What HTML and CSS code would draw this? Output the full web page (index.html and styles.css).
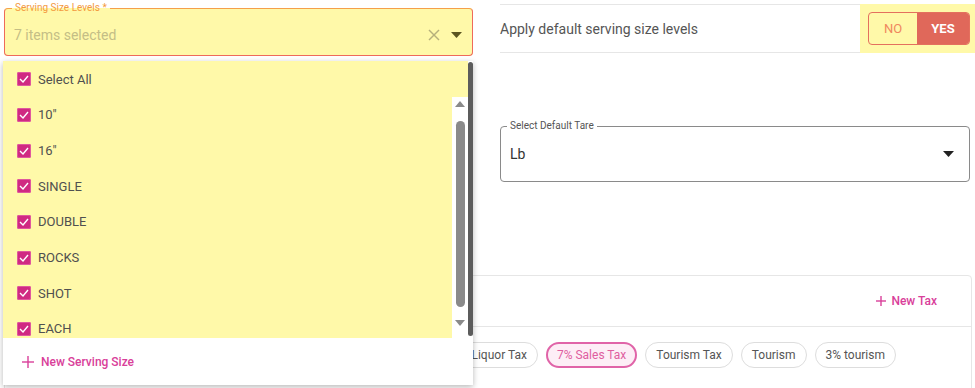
FILE: index.html
```html
<!DOCTYPE html>
<html lang="en">
<head>
    <meta charset="UTF-8">
    <meta name="viewport" content="width=device-width, initial-scale=1.0">
    <title>Serving Sizes</title>
    <link rel="stylesheet" href="styles.css">
</head>
<body>
    <div class="page">
        <div class="top">
            <div class="col-left">
                <fieldset class="field field-active">
                    <legend>Serving Size Levels *</legend>
                    <div class="field-row">
                        <span class="placeholder">7 items selected</span>
                        <svg class="clear-icon" width="12" height="12" viewBox="0 0 12 12" fill="none" stroke="currentColor" stroke-width="1.4">
                            <line x1="1" y1="1" x2="11" y2="11"></line>
                            <line x1="11" y1="1" x2="1" y2="11"></line>
                        </svg>
                        <svg class="arrow-icon arrow-dark" width="11" height="6" viewBox="0 0 11 6"><polygon points="0 0 11 0 5.5 6" fill="currentColor"></polygon></svg>
                    </div>
                </fieldset>
            </div>

            <div class="col-right">
                <div class="toggle-row">
                    <span class="toggle-label">Apply default serving size levels</span>
                    <div class="toggle-hl">
                        <div class="toggle">
                            <span class="toggle-no">NO</span>
                            <span class="toggle-yes">YES</span>
                        </div>
                    </div>
                </div>

                <fieldset class="field tare-field">
                    <legend>Select Default Tare</legend>
                    <div class="field-row">
                        <span class="value">Lb</span>
                        <svg class="arrow-icon" width="11" height="6" viewBox="0 0 11 6"><polygon points="0 0 11 0 5.5 6" fill="currentColor"></polygon></svg>
                    </div>
                </fieldset>
            </div>
        </div>

        <div class="tax-card">
            <div class="tax-head">
                <a class="link-add">
                    <svg width="10" height="10" viewBox="0 0 10 10" stroke="currentColor" stroke-width="1.4"><line x1="5" y1="0" x2="5" y2="10"></line><line x1="0" y1="5" x2="10" y2="5"></line></svg>
                    New Tax
                </a>
            </div>
            <div class="chips">
                <span class="chip">Liquor Tax</span>
                <span class="chip chip-on">7% Sales Tax</span>
                <span class="chip">Tourism Tax</span>
                <span class="chip">Tourism</span>
                <span class="chip">3% tourism</span>
            </div>
        </div>

        <!-- open dropdown of the serving size select -->
        <div class="dropdown">
            <div class="dd-body">
                <div class="dd-main">
                    <div class="dd-item dd-head">
                        <span class="check"><svg width="10" height="8" viewBox="0 0 10 8" fill="none" stroke="#fff" stroke-width="1.4"><polyline points="1 4 4 7 9 1"></polyline></svg></span>
                        Select All
                    </div>
                    <div class="dd-scroll">
                        <div class="dd-items">
                            <div class="dd-item"><span class="check"><svg width="10" height="8" viewBox="0 0 10 8" fill="none" stroke="#fff" stroke-width="1.4"><polyline points="1 4 4 7 9 1"></polyline></svg></span>10"</div>
                            <div class="dd-item"><span class="check"><svg width="10" height="8" viewBox="0 0 10 8" fill="none" stroke="#fff" stroke-width="1.4"><polyline points="1 4 4 7 9 1"></polyline></svg></span>16"</div>
                            <div class="dd-item"><span class="check"><svg width="10" height="8" viewBox="0 0 10 8" fill="none" stroke="#fff" stroke-width="1.4"><polyline points="1 4 4 7 9 1"></polyline></svg></span>SINGLE</div>
                            <div class="dd-item"><span class="check"><svg width="10" height="8" viewBox="0 0 10 8" fill="none" stroke="#fff" stroke-width="1.4"><polyline points="1 4 4 7 9 1"></polyline></svg></span>DOUBLE</div>
                            <div class="dd-item"><span class="check"><svg width="10" height="8" viewBox="0 0 10 8" fill="none" stroke="#fff" stroke-width="1.4"><polyline points="1 4 4 7 9 1"></polyline></svg></span>ROCKS</div>
                            <div class="dd-item"><span class="check"><svg width="10" height="8" viewBox="0 0 10 8" fill="none" stroke="#fff" stroke-width="1.4"><polyline points="1 4 4 7 9 1"></polyline></svg></span>SHOT</div>
                            <div class="dd-item"><span class="check"><svg width="10" height="8" viewBox="0 0 10 8" fill="none" stroke="#fff" stroke-width="1.4"><polyline points="1 4 4 7 9 1"></polyline></svg></span>EACH</div>
                        </div>
                        <div class="sb-track">
                            <span class="sb-up"></span>
                            <span class="sb-thumb"></span>
                            <span class="sb-down"></span>
                        </div>
                    </div>
                </div>
                <div class="dd-bar"></div>
            </div>
            <div class="dd-foot">
                <a class="link-add">
                    <svg width="12" height="12" viewBox="0 0 12 12" stroke="currentColor" stroke-width="1.4"><line x1="6" y1="0" x2="6" y2="12"></line><line x1="0" y1="6" x2="12" y2="6"></line></svg>
                    New Serving Size
                </a>
            </div>
        </div>
    </div>
</body>
</html>
```

FILE: styles.css
```css
:root {
    --hl-yellow: #fff9a9;
    --pink: #d9409a;
    --border: #e6e6e6;
    --text: #555555;
}

* {
    box-sizing: border-box;
    margin: 0;
    padding: 0;
}

body {
    font-family: Roboto, "Noto Sans", sans-serif;
    background-color: #ffffff;
    color: var(--text);
}

.page {
    position: relative;
    width: 975px;
    height: 388px;
    overflow: hidden;
}

.top {
    display: grid;
    grid-template-columns: 469px 475px;
    column-gap: 27px;
    padding: 2px 0 0 4px;
}

/* outlined fields */
.field {
    border: 1px solid #8a8a8a;
    border-radius: 4px;
    min-width: 0;
    padding: 0 10px 0 8px;
}

.field legend {
    font-size: 10px;
    line-height: 12px;
    padding: 0 3px;
    margin-left: -1px;
    color: #555;
}

.field-row {
    display: flex;
    align-items: center;
    height: 41px;
}

.field-active {
    background-color: var(--hl-yellow);
    border-color: #f5a04a #ee6a5b #ee6a5b #ee6a5b;
}

.field-active legend {
    color: #f39a3e;
}

.placeholder {
    flex: 1;
    font-size: 14px;
    color: #c4be86;
    padding-left: 1px;
}

.clear-icon {
    color: #b6b07c;
    margin-right: 11px;
}

.arrow-icon {
    color: #222;
}

.arrow-dark {
    color: #5b5520;
}

/* right column */
.toggle-row {
    display: flex;
    align-items: center;
    margin-top: 2px;
    height: 49px;
    border-top: 1px solid var(--border);
    border-bottom: 1px solid var(--border);
}

.toggle-label {
    flex: 1;
    font-size: 14px;
    color: var(--text);
}

.toggle-hl {
    align-self: stretch;
    margin: -1px 0;
    width: 115px;
    padding: 0 5px 0 8px;
    display: flex;
    align-items: center;
    background-color: var(--hl-yellow);
}

.toggle {
    display: flex;
    height: 33px;
    width: 102px;
    border: 1px solid #e4705e;
    border-radius: 4px;
    overflow: hidden;
    font-size: 13px;
}

.toggle span {
    display: flex;
    align-items: center;
    justify-content: center;
}

.toggle-no {
    width: 48px;
    color: #f0875e;
}

.toggle-yes {
    flex: 1;
    background-color: #e0685a;
    color: #ffffff;
    font-weight: 700;
}

.tare-field {
    margin-top: 67px;
    width: 470px;
    padding-left: 7px;
    padding-right: 15px;
}

.tare-field .field-row {
    height: 43px;
    margin-bottom: 6px;
}

.value {
    flex: 1;
    font-size: 14px;
    color: #333;
    padding-left: 2px;
}

/* tax card */
.tax-card {
    margin: 93px 3px 0 4px;
    border: 1px solid var(--border);
    border-radius: 4px;
    height: 140px;
}

.tax-head {
    display: flex;
    align-items: center;
    justify-content: flex-end;
    height: 51px;
    padding: 0 34px 0 16px;
    border-bottom: 1px solid var(--border);
}

.link-add {
    display: flex;
    align-items: center;
    gap: 5px;
    color: var(--pink);
    font-size: 12px;
    font-weight: 500;
}

.chips {
    display: flex;
    justify-content: flex-end;
    gap: 8px;
    padding: 15px 75px 0 0;
}

.chip {
    display: flex;
    align-items: center;
    height: 26px;
    padding: 0 10px;
    border: 1px solid #dddddd;
    border-radius: 13px;
    font-size: 12px;
    color: var(--text);
}

.chip-on {
    border: 2px solid #e064a8;
    background-color: #fdeef6;
    color: #df5ea0;
    padding: 0 9px;
}

/* dropdown overlay */
.dropdown {
    position: absolute;
    left: 3px;
    top: 61px;
    width: 470px;
    height: 324px;
    background-color: #ffffff;
    box-shadow: 0 2px 6px rgba(0, 0, 0, 0.28);
    display: flex;
    flex-direction: column;
}

.dd-body {
    display: flex;
    height: 277px;
}

.dd-main {
    flex: 1;
    display: flex;
    flex-direction: column;
    background-color: var(--hl-yellow);
}

.dd-item {
    display: flex;
    align-items: center;
    gap: 7px;
    height: 35.7px;
    padding-left: 14px;
    font-size: 13px;
    color: #505050;
}

.dd-head {
    height: 36px;
    flex-shrink: 0;
}

.check {
    width: 14px;
    height: 14px;
    border-radius: 2px;
    background-color: #d02a82;
    box-shadow: inset 0 0 0 1px #e0589e;
    display: flex;
    align-items: center;
    justify-content: center;
}

.dd-scroll {
    flex: 1;
    display: flex;
    overflow: hidden;
}

.dd-items {
    flex: 1;
}

.sb-track {
    width: 16px;
    background-color: #ffffff;
    display: flex;
    flex-direction: column;
    align-items: center;
    padding-top: 4px;
}

.sb-up,
.sb-down {
    width: 0;
    height: 0;
    border-left: 5px solid transparent;
    border-right: 5px solid transparent;
}

.sb-up {
    border-bottom: 6px solid #8a8a8a;
}

.sb-down {
    border-top: 6px solid #8a8a8a;
    margin-top: 13px;
}

.sb-thumb {
    width: 9px;
    height: 186px;
    margin-top: 14px;
    border-radius: 5px;
    background-color: #8a8a8a;
}

.dd-bar {
    width: 5px;
    margin: 1px 0 2px;
    border-radius: 3px;
    background-color: #5c5c5c;
}

.dd-foot {
    flex: 1;
    display: flex;
    align-items: center;
    padding-left: 19px;
}

.dd-foot .link-add {
    gap: 7px;
}
```
